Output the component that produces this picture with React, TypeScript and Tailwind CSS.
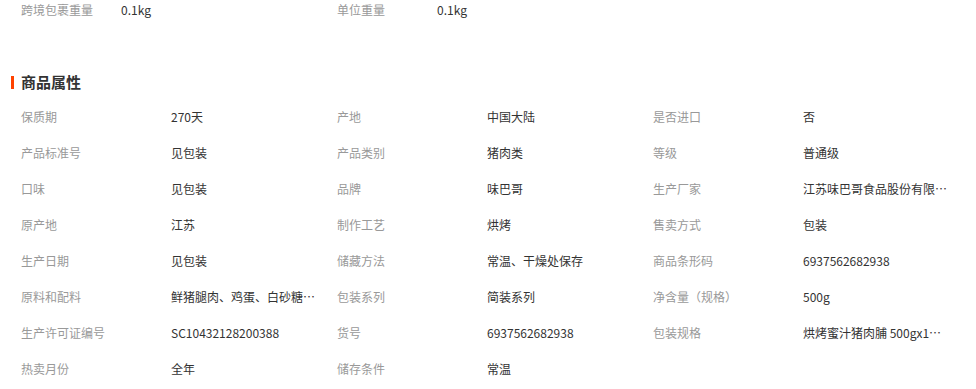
const topItems = [
  { label: '跨境包裹重量', value: '0.1kg' },
  { label: '单位重量', value: '0.1kg' },
];

const attrs = [
  ['保质期', '270天'],
  ['产地', '中国大陆'],
  ['是否进口', '否'],
  ['产品标准号', '见包装'],
  ['产品类别', '猪肉类'],
  ['等级', '普通级'],
  ['口味', '见包装'],
  ['品牌', '味巴哥'],
  ['生产厂家', '江苏味巴哥食品股份有限公司'],
  ['原产地', '江苏'],
  ['制作工艺', '烘烤'],
  ['售卖方式', '包装'],
  ['生产日期', '见包装'],
  ['储藏方法', '常温、干燥处保存'],
  ['商品条形码', '6937562682938'],
  ['原料和配料', '鲜猪腿肉、鸡蛋、白砂糖、食用盐'],
  ['包装系列', '简装系列'],
  ['净含量（规格）', '500g'],
  ['生产许可证编号', 'SC10432128200388'],
  ['货号', '6937562682938'],
  ['包装规格', '烘烤蜜汁猪肉脯 500gx1袋装'],
  ['热卖月份', '全年'],
  ['储存条件', '常温'],
];

export default function App() {
  return (
    <div
      className="w-[976px] h-[389px] bg-white overflow-hidden text-[12px]"
      style={{ fontFamily: '"Noto Sans CJK SC", "Liberation Sans", sans-serif' }}
    >
      <div className="flex pl-[21px] h-[20px] items-center">
        {topItems.map((it) => (
          <div key={it.label} className="flex w-[316px]">
            <span className="w-[100px] text-[#999]">{it.label}</span>
            <span className="text-[#333]">{it.value}</span>
          </div>
        ))}
      </div>

      <div className="flex items-center mt-[52px] h-[20px] pl-[11px]">
        <span className="w-[3px] h-[13px] bg-[#ff4200] mr-[7px]" />
        <span className="text-[15px] font-bold text-[#333]">商品属性</span>
      </div>

      <div className="grid grid-cols-[316px_316px_316px] pl-[21px] mt-[7px]">
        {attrs.map(([label, value]) => (
          <div key={label} className="flex h-[36px] items-center">
            <span className="w-[150px] shrink-0 text-[#999]">{label}</span>
            <span className="w-[146px] truncate text-[#333]">{value}</span>
          </div>
        ))}
      </div>
    </div>
  );
}
